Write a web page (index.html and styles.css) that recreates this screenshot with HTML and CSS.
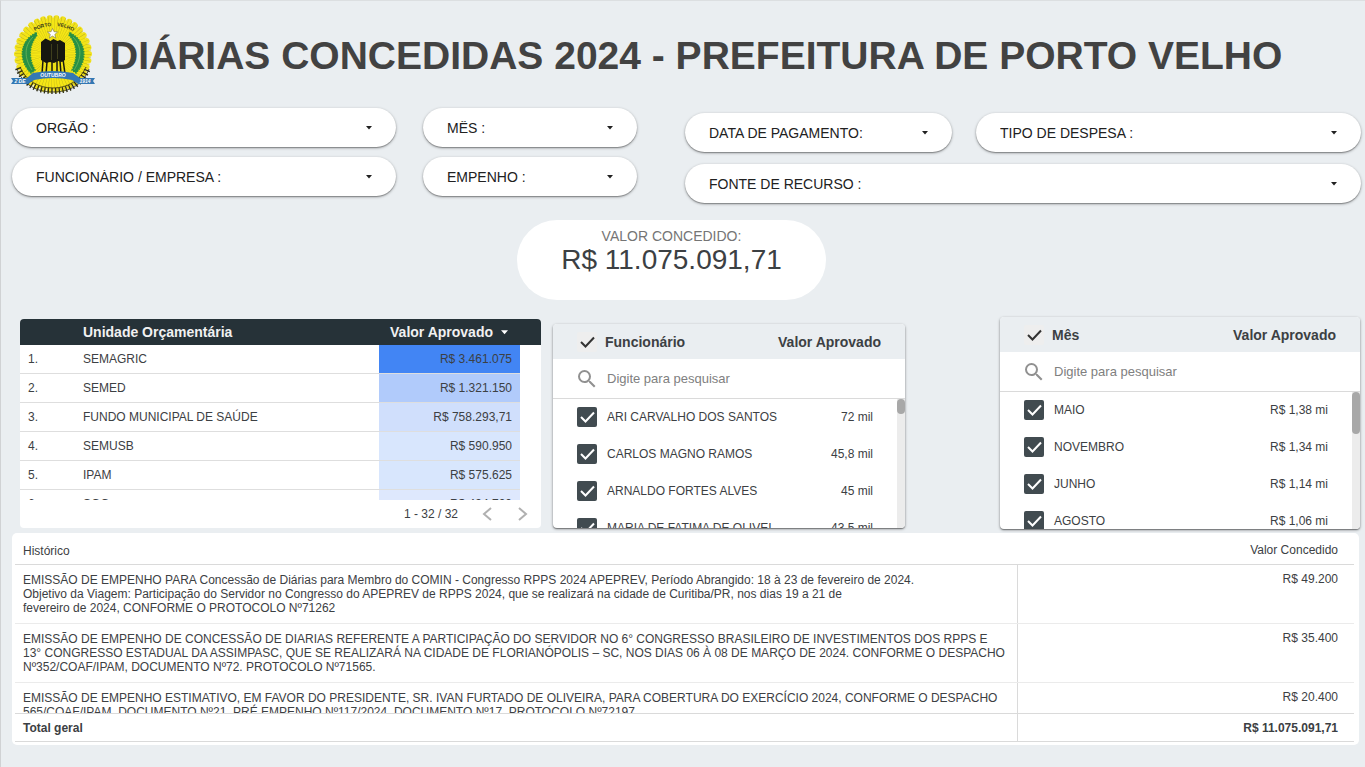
FILE: index.html
```html
<!DOCTYPE html>
<html lang="pt-BR">
<head>
<meta charset="utf-8">
<title>Diárias Concedidas 2024</title>
<link rel="stylesheet" href="styles.css">
</head>
<body>
<svg class="defs" aria-hidden="true">
  <symbol id="lens" viewBox="0 0 24 24"><path d="M15.5 14h-.79l-.28-.27A6.47 6.47 0 0 0 16 9.500A6.500 6.500 0 1 0 9.500 16c1.610 0 3.090-.59 4.230-1.570l.27.28v.79l5 4.990L20.490 19l-4.990-5zm-6 0C7.010 14 5 11.990 5 9.500S7.010 5 9.500 5 14 7.010 14 9.500 11.990 14 9.500 14z"/></symbol>
  <symbol id="caret" viewBox="0 0 6 4"><path d="M0 0h6L3 3.500z"/></symbol>
</svg>
<header class="top">
  <svg class="logo" viewBox="10 14 86 83" role="img" aria-label="Brasão de Porto Velho">
    <circle cx="53" cy="54" r="36" fill="#f5e615"/>
    <circle cx="53" cy="54" r="36" fill="none" stroke="#f2e21c" stroke-width="6" stroke-linecap="round" stroke-dasharray=".01 .99" pathLength="34"/>
    <circle cx="53" cy="54" r="22" fill="none" stroke="#b9b01c" stroke-width="32" stroke-dasharray=".14 .86" pathLength="66"/>
    <path d="M18 68C24 84 37 91 53 91S82 84 88 68" fill="none" stroke="#2c2b14" stroke-width="6" stroke-dasharray="1.300 2.300"/>
    <path d="M17 69C23 85 37 92 53 92S83 85 89 69M20 67C26 81 39 88 53 88S80 81 86 67" fill="none" stroke="#2c2b14" stroke-width=".8"/>
    <path d="M36 33C21 40 17 59 31 73L35 70C28 58 29 45 37 35ZM70 33C85 40 89 59 76 73L72 70C78 58 78 45 69 35Z" fill="#289045" stroke="#289045" stroke-width="1.500" stroke-dasharray="1.600 1"/>
    <path d="M33 37C24 46 24 58 32 70M73 37C82 46 82 58 74 70" fill="none" stroke="#6fb85a" stroke-width=".8"/>
    <path id="crest-arc" d="M30 34Q53 18 78 34" fill="none"/>
    <text class="crest-name" text-anchor="middle"><textPath href="#crest-arc" startOffset="50%">PORTO&#160;&#160;&#160;&#160;VELHO</textPath></text>
    <path d="M52.500 28.500l1.500 3.200 3.600.3-2.800 2.400 1 3.700-3.300-2.100-3.200 2.100 1-3.700-2.800-2.400 3.600-.3z" fill="#fff" stroke="#777753" stroke-width=".6"/>
    <path d="M41 42l4.500-3.500 5 2.500 3-2 4 2 2.500-1 5 3v17l-3 2-4-1-4 2-4-1-4 1-5-3z" fill="#171710"/>
    <path d="M43 60l-1 14M47 62l-1 12M52 61v13M57 61v13M60 61l1 13M63 59l2 15" fill="none" stroke="#171710" stroke-width="1.500"/>
    <path d="M51.500 44v16M57.500 44v15" stroke="#5b5a27" stroke-width=".6"/>
    <path d="M33 73Q53 69 73 73L80 78H95L93 81L95 84H78L72 80Q53 76 34 80L28 84H11L13 81L11 78H27Z" fill="#3478b4"/>
    <text class="crest-date" x="53" y="77" text-anchor="middle">OUTUBRO</text>
    <text class="crest-date" x="20" y="83" text-anchor="middle">2 DE</text>
    <text class="crest-date" x="85" y="83" text-anchor="middle">1914</text>
  </svg>
  <h1>DIÁRIAS CONCEDIDAS 2024 - PREFEITURA DE PORTO VELHO</h1>
</header>

<main>
  <section class="filters">
    <div class="filters-left">
      <label class="pill"><select aria-label="Orgão"><option>ORGÃO :</option></select><svg><use href="#caret"/></svg></label>
      <label class="pill"><select aria-label="Mês"><option>MÊS :</option></select><svg><use href="#caret"/></svg></label>
      <label class="pill"><select aria-label="Funcionário / Empresa"><option>FUNCIONÁRIO / EMPRESA :</option></select><svg><use href="#caret"/></svg></label>
      <label class="pill"><select aria-label="Empenho"><option>EMPENHO :</option></select><svg><use href="#caret"/></svg></label>
    </div>
    <div class="filters-right">
      <label class="pill"><select aria-label="Data de pagamento"><option>DATA DE PAGAMENTO:</option></select><svg><use href="#caret"/></svg></label>
      <label class="pill"><select aria-label="Tipo de despesa"><option>TIPO DE DESPESA :</option></select><svg><use href="#caret"/></svg></label>
      <label class="pill wide"><select aria-label="Fonte de recurso"><option>FONTE DE RECURSO :</option></select><svg><use href="#caret"/></svg></label>
    </div>
  </section>

  <section class="kpi">
    <p class="kpi-label">VALOR CONCEDIDO:</p>
    <p class="kpi-value">R$ 11.075.091,71</p>
  </section>

  <section class="panels">
    <div class="units">
      <table>
        <thead><tr><th></th><th>Unidade Orçamentária</th><th class="num">Valor Aprovado <svg><use href="#caret"/></svg></th></tr></thead>
        <tbody>
          <tr><td>1.</td><td>SEMAGRIC</td><td class="num heat-1">R$ 3.461.075</td></tr>
          <tr><td>2.</td><td>SEMED</td><td class="num heat-2">R$ 1.321.150</td></tr>
          <tr><td>3.</td><td>FUNDO MUNICIPAL DE SAÚDE</td><td class="num heat-3">R$ 758.293,71</td></tr>
          <tr><td>4.</td><td>SEMUSB</td><td class="num heat-4">R$ 590.950</td></tr>
          <tr><td>5.</td><td>IPAM</td><td class="num heat-4">R$ 575.625</td></tr>
          <tr><td>6.</td><td>SGG</td><td class="num heat-5">R$ 494.700</td></tr>
        </tbody>
      </table>
      <div class="pager">
        <span>1 - 32 / 32</span>
        <button aria-label="Anterior"><svg viewBox="0 0 10 16"><path d="M9 2L2 8l7 6"/></svg></button>
        <button aria-label="Próxima"><svg viewBox="0 0 10 16"><path d="M1 2l7 6-7 6"/></svg></button>
      </div>
    </div>

    <div class="picker people">
      <div class="picker-head"><input type="checkbox" class="all" id="all-people" checked><label for="all-people">Funcionário</label><span>Valor Aprovado</span></div>
      <div class="search"><svg><use href="#lens"/></svg><input type="text" placeholder="Digite para pesquisar" aria-label="Pesquisar funcionário"></div>
      <div class="picker-body">
        <div class="options">
          <label class="option"><input type="checkbox" checked><span class="name">ARI CARVALHO DOS SANTOS</span><span>72 mil</span></label>
          <label class="option"><input type="checkbox" checked><span class="name">CARLOS MAGNO RAMOS</span><span>45,8 mil</span></label>
          <label class="option"><input type="checkbox" checked><span class="name">ARNALDO FORTES ALVES</span><span>45 mil</span></label>
          <label class="option"><input type="checkbox" checked><span class="name">MARIA DE FATIMA DE OLIVEI...</span><span>43,5 mil</span></label>
        </div>
        <div class="track"><div class="thumb"></div></div>
      </div>
    </div>

    <div class="picker months">
      <div class="picker-head"><input type="checkbox" class="all" id="all-months" checked><label for="all-months">Mês</label><span>Valor Aprovado</span></div>
      <div class="search"><svg><use href="#lens"/></svg><input type="text" placeholder="Digite para pesquisar" aria-label="Pesquisar mês"></div>
      <div class="picker-body">
        <div class="options">
          <label class="option"><input type="checkbox" checked><span class="name">MAIO</span><span>R$ 1,38 mi</span></label>
          <label class="option"><input type="checkbox" checked><span class="name">NOVEMBRO</span><span>R$ 1,34 mi</span></label>
          <label class="option"><input type="checkbox" checked><span class="name">JUNHO</span><span>R$ 1,14 mi</span></label>
          <label class="option"><input type="checkbox" checked><span class="name">AGOSTO</span><span>R$ 1,06 mi</span></label>
        </div>
        <div class="track"><div class="thumb"></div></div>
      </div>
    </div>
  </section>

  <section class="history">
    <table>
      <thead><tr><th>Histórico</th><th>Valor Concedido</th></tr></thead>
      <tbody>
        <tr><td>EMISSÃO DE EMPENHO PARA Concessão de Diárias para Membro do COMIN - Congresso RPPS 2024 APEPREV, Período Abrangido: 18 à 23 de fevereiro de 2024.<br>Objetivo da Viagem: Participação do Servidor no Congresso do APEPREV de RPPS 2024, que se realizará na cidade de Curitiba/PR, nos dias 19 a 21 de<br>fevereiro de 2024, CONFORME O PROTOCOLO Nº71262</td><td>R$ 49.200</td></tr>
        <tr><td>EMISSÃO DE EMPENHO DE CONCESSÃO DE DIARIAS REFERENTE A PARTICIPAÇÃO DO SERVIDOR NO 6° CONGRESSO BRASILEIRO DE INVESTIMENTOS DOS RPPS E 13° CONGRESSO ESTADUAL DA ASSIMPASC, QUE SE REALIZARÁ NA CIDADE DE FLORIANÓPOLIS – SC, NOS DIAS 06 À 08 DE MARÇO DE 2024. CONFORME O DESPACHO Nº352/COAF/IPAM, DOCUMENTO Nº72. PROTOCOLO Nº71565.</td><td>R$ 35.400</td></tr>
        <tr><td>EMISSÃO DE EMPENHO ESTIMATIVO, EM FAVOR DO PRESIDENTE, SR. IVAN FURTADO DE OLIVEIRA, PARA COBERTURA DO EXERCÍCIO 2024, CONFORME O DESPACHO 565/COAF/IPAM, DOCUMENTO Nº21, PRÉ EMPENHO Nº117/2024, DOCUMENTO Nº17, PROTOCOLO Nº72197.</td><td>R$ 20.400</td></tr>
      </tbody>
      <tfoot><tr><th>Total geral</th><td>R$ 11.075.091,71</td></tr></tfoot>
    </table>
  </section>
</main>
</body>
</html>
```
FILE: styles.css
```css
* { box-sizing: border-box; }
html { background: #eaeef1; }
body {
  margin: 0;
  min-height: 100vh;
  border-left: 1px solid #d0d2d4;
  border-top: 1px solid #dcdfe1;
  background: #eaeef1;
  color: #3c4043;
  font: 12px/14px "Liberation Sans", Arial, sans-serif;
}
p, h1 { margin: 0; }
button, input, select { font: inherit; color: inherit; }
.defs { display: none; }

.top {
  display: flex;
  align-items: center;
  gap: 14px;
  height: 107px;
  padding: 2px 0 0 9px;
}
.logo { width: 86px; height: 83px; flex: none; }
.crest-name { font: bold 5px "Liberation Sans", sans-serif; fill: #33331a; }
.crest-date { font: italic bold 5px "Liberation Sans", sans-serif; fill: #fff; }
h1 { font-size: 39px; line-height: 46px; color: #424242; white-space: nowrap; }

.filters { display: flex; gap: 48px; padding: 0 4px 0 11px; }
.filters-left {
  flex: 625 1 0;
  display: grid;
  grid-template-columns: 384fr 214fr;
  gap: 10px 27px;
  align-content: start;
}
.filters-right {
  flex: 676 1 0;
  display: grid;
  grid-template-columns: 267fr 385fr;
  gap: 12px 24px;
  padding-top: 5px;
}
.pill {
  display: flex;
  align-items: center;
  height: 39px;
  padding-right: 24px;
  border-radius: 20px;
  background: #fff;
  box-shadow: 0 1px 3px rgba(0, 0, 0, .35), 0 1px 1px rgba(0, 0, 0, .25);
}
.pill.wide { grid-column: span 2; }
.pill select {
  flex: 1;
  min-width: 0;
  height: 39px;
  padding: 0 24px;
  border: 0;
  background: none;
  appearance: none;
  font-size: 14px;
  color: #212121;
}
.pill svg { width: 6px; height: 4px; fill: #212121; }

.kpi {
  width: 309px;
  height: 80px;
  margin: 17px auto 0 calc(50% - 166px);
  padding-top: 8px;
  border-radius: 40px;
  background: #fff;
  text-align: center;
}
.kpi-label { font-size: 14px; line-height: 16px; color: #757575; }
.kpi-value { font-size: 28px; line-height: 32px; }

.panels {
  display: flex;
  align-items: flex-start;
  padding: 17px 5px 0 19px;
}

.units {
  flex: 521 1 0;
  margin-top: 2px;
  border-radius: 4px;
  background: #fff;
  overflow: hidden;
}
.units table, .history table { display: block; }
.units thead, .units tbody, .history thead, .history tbody, .history tfoot { display: block; }
.units tr { display: grid; grid-template-columns: 55px 1fr 141px; padding-right: 21px; }
.units thead { background: #263238; color: #f1f1f1; font-size: 14px; }
.units th { height: 26px; padding: 5px 8px; line-height: 16px; text-align: left; }
.units th.num { position: relative; padding-right: 27px; white-space: nowrap; }
.units th svg { position: absolute; right: 12px; top: 11px; width: 7px; height: 5px; fill: #fff; }
.units tbody { height: 155px; overflow: hidden; }
.units td { height: 29px; padding: 7px 8px; border-bottom: 1px solid #dedede; }
.units .num { text-align: right; }
.heat-1 { background: #4285f4; }
.heat-2 { background: #b1cbfb; }
.heat-3 { background: #d0dffc; }
.heat-4 { background: #d8e6fd; }
.heat-5 { background: #dee8fd; }
.pager { display: flex; align-items: center; justify-content: flex-end; height: 28px; padding-right: 9px; }
.pager span { margin-right: 20px; }
.pager button { display: flex; padding: 0 4px; border: 0; background: none; }
.pager button + button { margin-left: 18px; }
.pager svg { width: 10px; height: 16px; fill: none; stroke: #b0b0b0; stroke-width: 2; }

.picker {
  border-radius: 4px;
  background: #fff;
  box-shadow: 0 1px 3px rgba(0, 0, 0, .4), 0 1px 1px rgba(0, 0, 0, .3);
  overflow: hidden;
}
.people { flex: 352 1 0; margin: 7px 95px 0 12px; }
.months { flex: 360 1 0; }
.picker-head {
  display: flex;
  align-items: center;
  height: 35px;
  padding: 0 24px;
  background: #eaeef1;
  font-size: 14px;
  font-weight: bold;
}
.picker-head label { flex: 1; margin-left: 8px; }
.picker input[type="checkbox"] {
  appearance: none;
  flex: none;
  width: 20px;
  height: 20px;
  margin: 0;
  border-radius: 2px;
  background: #414b50 url("data:image/svg+xml,%3Csvg xmlns='http://www.w3.org/2000/svg' viewBox='0 0 20 20'%3E%3Cpath d='M4 10l4.500 4.500L17 5.500' fill='none' stroke='%23fff' stroke-width='2'/%3E%3C/svg%3E");
}
.picker input[type="checkbox"].all {
  background: #eeeeee url("data:image/svg+xml,%3Csvg xmlns='http://www.w3.org/2000/svg' viewBox='0 0 20 20'%3E%3Cpath d='M4 10l4.500 4.500L17 5.500' fill='none' stroke='%23333' stroke-width='2'/%3E%3C/svg%3E");
}
.search {
  display: flex;
  align-items: center;
  height: 40px;
  padding: 0 22px;
  border-bottom: 1px solid #dadada;
}
.search svg { width: 24px; height: 24px; fill: #919191; }
.search input { flex: 1; min-width: 0; margin-left: 8px; padding: 0; border: 0; outline: 0; background: none; font-size: 13px; }
.search input::placeholder { color: #808080; opacity: 1; }
.picker-body { display: flex; height: 129px; }
.months .picker-body { height: 137px; }
.options { flex: 1; min-width: 0; overflow: hidden; }
.option { display: flex; align-items: flex-start; height: 37px; padding: 8px 24px 0; line-height: 20px; }
.option .name { flex: 1; margin-left: 10px; white-space: nowrap; }
.track { width: 8px; background: #ececec; }
.thumb { height: 15px; border-radius: 4px; background: #a8a8a8; }
.months .thumb { height: 42px; }

.history {
  margin: 4px 6px 0 11px;
  padding: 0 5px 3px 3px;
  border-radius: 5px;
  background: #fff;
}
.history tr { display: grid; grid-template-columns: 1003fr 336fr; }
.history th, .history td { padding: 8px; }
.history tr > :last-child { padding-top: 7px; padding-right: 16px; text-align: right; }
.history tr > :first-child { border-right: 1px solid #dadada; }
.history thead { border-bottom: 1px solid #dadada; }
.history thead th { padding-top: 11px; padding-bottom: 6px; font-weight: normal; text-align: left; }
.history thead tr > :first-child { border-right-color: transparent; }
.history thead tr > :last-child { padding-top: 10px; }
.history tbody { height: 148px; overflow: hidden; }
.history tbody tr { height: 59px; border-bottom: 1px solid #ebebeb; }
.history tfoot { border: 1px solid #dadada; border-width: 1px 0; }
.history tfoot th, .history tfoot td { padding-top: 7px; padding-bottom: 6px; font-weight: bold; text-align: left; }
```
